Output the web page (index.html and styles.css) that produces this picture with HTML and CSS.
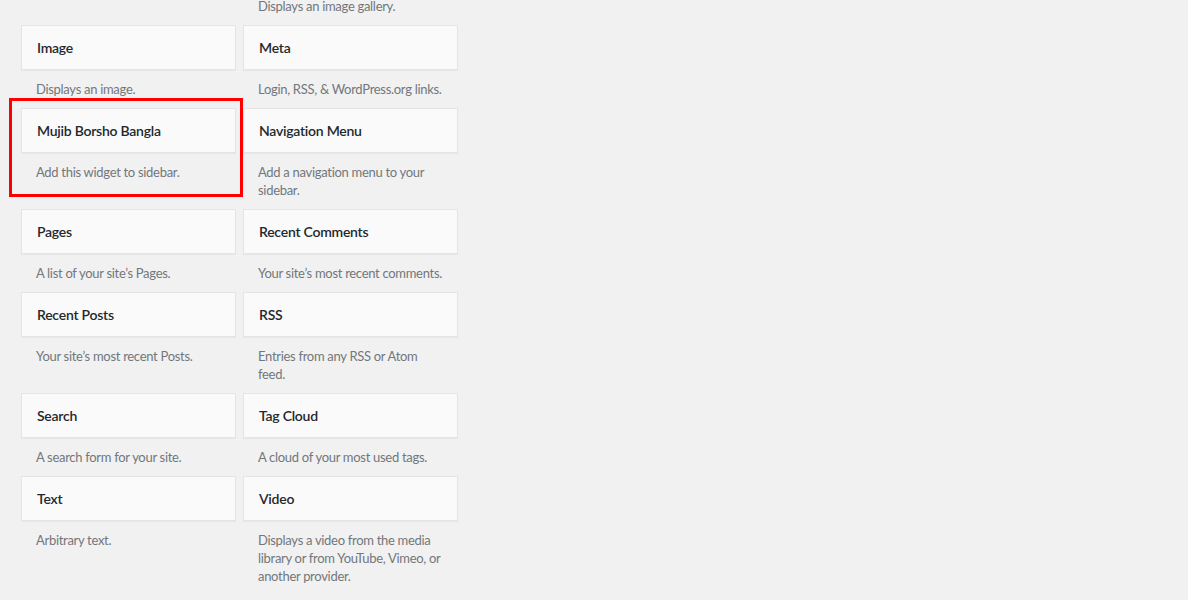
FILE: index.html
```html
<!DOCTYPE html>
<html lang="en">
<head>
<meta charset="utf-8">
<title>Widgets</title>
<link rel="stylesheet" href="styles.css">
</head>
<body>
<div class="widget-list">
  <div class="widget empty"></div>
  <div class="widget top-cut"><p class="desc">Displays an image gallery.</p></div>

  <div class="widget"><div class="widget-top"><h3>Image</h3></div><p class="desc">Displays an image.</p></div>
  <div class="widget"><div class="widget-top"><h3>Meta</h3></div><p class="desc">Login, RSS, &amp; WordPress.org links.</p></div>

  <div class="widget highlighted"><div class="widget-top"><h3>Mujib Borsho Bangla</h3></div><p class="desc">Add this widget to sidebar.</p><span class="mark"></span></div>
  <div class="widget"><div class="widget-top"><h3>Navigation Menu</h3></div><p class="desc">Add a navigation menu to your sidebar.</p></div>

  <div class="widget"><div class="widget-top"><h3>Pages</h3></div><p class="desc">A list of your site’s Pages.</p></div>
  <div class="widget"><div class="widget-top"><h3>Recent Comments</h3></div><p class="desc">Your site’s most recent comments.</p></div>

  <div class="widget"><div class="widget-top"><h3>Recent Posts</h3></div><p class="desc">Your site’s most recent Posts.</p></div>
  <div class="widget"><div class="widget-top"><h3>RSS</h3></div><p class="desc">Entries from any RSS or Atom feed.</p></div>

  <div class="widget"><div class="widget-top"><h3>Search</h3></div><p class="desc">A search form for your site.</p></div>
  <div class="widget"><div class="widget-top"><h3>Tag Cloud</h3></div><p class="desc">A cloud of your most used tags.</p></div>

  <div class="widget"><div class="widget-top"><h3>Text</h3></div><p class="desc">Arbitrary text.</p></div>
  <div class="widget"><div class="widget-top"><h3>Video</h3></div><p class="desc">Displays a video from the media library or from YouTube, Vimeo, or another provider.</p></div>
</div>
</body>
</html>
```

FILE: styles.css
```css
html, body {
  margin: 0;
  padding: 0;
  background: #f1f1f1;
}

body {
  font-family: "Lato", "Noto Sans", "Liberation Sans", sans-serif;
  color: #23282d;
  height: 600px;
  overflow: hidden;
}

.widget-list {
  display: grid;
  grid-template-columns: 215px 215px;
  column-gap: 7px;
  padding-left: 21px;
  margin-top: -3px;
  align-items: start;
}

.widget {
  position: relative;
}

.widget-top {
  box-sizing: border-box;
  height: 45px;
  background: #fafafa;
  border: 1px solid #e5e5e5;
  box-shadow: 0 1px 1px rgba(0, 0, 0, 0.04);
  display: flex;
  align-items: center;
  padding: 0 15px;
}

.widget-top h3 {
  margin: 0;
  font-size: 14px;
  font-weight: 600;
  line-height: 18px;
  letter-spacing: -0.25px;
  color: #23282d;
}

.desc {
  margin: 0;
  padding: 10px 12px 10px 15px;
  font-size: 13px;
  line-height: 18px;
  letter-spacing: -0.3px;
  color: #72777c;
}

.top-cut .desc {
  padding-top: 0;
}

.mark {
  position: absolute;
  left: -12px;
  top: -10px;
  right: -7px;
  bottom: -6px;
  border: 3px solid #ff0000;
  pointer-events: none;
}
```
